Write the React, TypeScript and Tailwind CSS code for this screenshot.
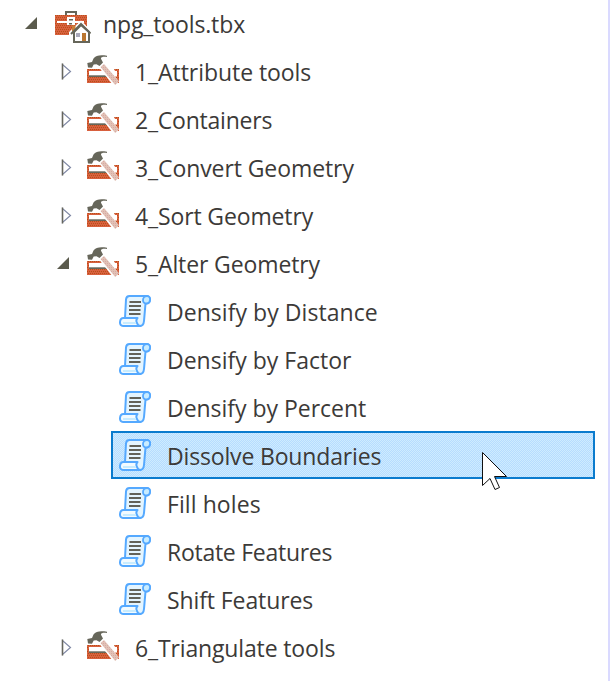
import React from "react";

type Kind = "root" | "toolset" | "script";
type Row = { label: string; kind: Kind; open?: boolean; selected?: boolean; tracking: string };

const rows: Row[] = [
  { label: "npg_tools.tbx", kind: "root", open: true, tracking: "tracking-[-0.13px]" },
  { label: "1_Attribute tools", kind: "toolset", tracking: "tracking-[-0.06px]" },
  { label: "2_Containers", kind: "toolset", tracking: "tracking-[-0.22px]" },
  { label: "3_Convert Geometry", kind: "toolset", tracking: "tracking-[-0.09px]" },
  { label: "4_Sort Geometry", kind: "toolset", tracking: "tracking-[-0.13px]" },
  { label: "5_Alter Geometry", kind: "toolset", open: true, tracking: "tracking-[-0.12px]" },
  { label: "Densify by Distance", kind: "script", tracking: "tracking-[0.05px]" },
  { label: "Densify by Factor", kind: "script", tracking: "tracking-[0px]" },
  { label: "Densify by Percent", kind: "script", tracking: "tracking-[-0.03px]" },
  { label: "Dissolve Boundaries", kind: "script", selected: true, tracking: "tracking-[-0.16px]" },
  { label: "Fill holes", kind: "script", tracking: "tracking-[0.08px]" },
  { label: "Rotate Features", kind: "script", tracking: "tracking-[-0.27px]" },
  { label: "Shift Features", kind: "script", tracking: "tracking-[-0.1px]" },
  { label: "6_Triangulate tools", kind: "toolset", tracking: "tracking-[-0.14px]" },
];

function Patterns() {
  return (
    <svg className="absolute size-0" aria-hidden="true">
      <defs>
        <pattern id="brick" width="4" height="4" patternUnits="userSpaceOnUse">
          <rect width="4" height="4" fill="#d8603e" />
          <path d="M0 0h1v1h-1zM2 0h1v1h-1zM1 2h1v1h-1zM3 2h1v1h-1z" fill="#b85018" />
        </pattern>
        <pattern id="wood" width="2" height="2" patternUnits="userSpaceOnUse">
          <rect width="2" height="2" fill="#e2c2b6" />
          <path d="M0 0h1v1h-1z" fill="#d6aaa5" />
        </pattern>
      </defs>
    </svg>
  );
}

function Arrow({ open }: { open?: boolean }) {
  return open ? (
    <svg width="12" height="12" viewBox="0 0 12 12">
      <path d="M12 0v12H0z" fill="#5b5b4d" />
    </svg>
  ) : (
    <svg width="12" height="17" viewBox="0 0 12 17">
      <path d="M1.500 1.500v14l8-7z" fill="#fff" stroke="#8089a5" strokeWidth="1.200" />
      <path d="M1.500 0.500v16" stroke="#66665c" strokeWidth="1.500" />
    </svg>
  );
}

function ToolboxIcon() {
  return (
    <svg width="36" height="32" viewBox="0 0 36 32">
      <path d="M11 4V1h10v3" fill="none" stroke="#66665a" strokeWidth="2" />
      <path d="M0 4h32v20H0z" fill="url(#brick)" />
      <path d="M2 10h27v2H2z" fill="#fff" />
      <path d="M12 6h8v8h-8z" fill="#fff" />
      <path d="M14 8h4v1.500h-4zM14 12h3v1.500h-3z" fill="#66665a" />
      <path d="M26 9.500L14 21v3h4v8h18V19.500z" fill="#fff" />
      <path d="M17 14.500h3.500v3.500L17 21z" fill="#c9803a" />
      <path d="M19 21l7-7 8 7v10H19z" fill="#fff" stroke="#66665a" strokeWidth="2" />
      <path d="M16 23L26 13l9.500 9.500" fill="none" stroke="#66665a" strokeWidth="2" />
      <path d="M21 22h4v4h-4z" fill="#aaaabb" />
      <path d="M27 22h4v8h-4z" fill="#bb7630" />
    </svg>
  );
}

function ToolsetIcon() {
  return (
    <svg width="34" height="32" viewBox="0 0 34 32">
      <path d="M0 14h32v14H0z" fill="url(#brick)" />
      <path d="M2 16h28v6H2z" fill="#fff" />
      <path d="M2 20.300h28V22H2z" fill="#66665a" />
      <path d="M12 12.500L17 8l5.500 6H27L33 26v4h-7z" fill="#fff" />
      <path d="M28 14h4v14h-1.500l1-2L28 21.500h2V16h-2z" fill="url(#brick)" />
      <path d="M13.500 12l3.500-3L32 26.500 28.200 30z" fill="url(#wood)" />
      <path d="M0.300 8L5 7l1.500-3.500C9 .5 13-.3 20 .8v1.300c-3.500-.6-5.800 0-6 1.200-.1 1 1.500 2.500 2 4.200L12.500 11 9.500 9.200 6.700 9.500 5 12.700 1 12.500z" fill="#66665a" />
    </svg>
  );
}

function ScriptIcon() {
  return (
    <svg width="32" height="32" viewBox="0 0 32 32">
      <g stroke="#55a9ff" strokeWidth="2" strokeLinejoin="round">
        <path d="M10.500 1H28c2 0 3.200 2 3 4s-1.500 3.500-3.500 3.500h-1L25 26c-.3 3-1.500 5-4 5H8l-2-8L7 4.500C7.200 2.500 8.500 1 10.500 1z" fill="#e4f5ff" />
        <path d="M27.500 8.500c-2 0-3.500-1.500-3.500-3.500s1.500-4 4-4 3.200 2 3 4-1.500 3.500-3.500 3.500z" fill="#c8ecff" strokeWidth="1.800" />
        <path d="M4.500 23H18.500c-1 1-1.500 3-.5 5 .5 1.500 1.700 3 3.500 3H4c-2 0-3.200-1.500-3-4s1.500-4 3.500-4z" fill="#f2fbff" />
      </g>
      <path d="M4 28h13" stroke="#c8ecff" strokeWidth="2" />
      <path d="M10.500 7h11.500M10 11h12M10 15h11.500M10 19h11.500" stroke="#626259" strokeWidth="2" />
    </svg>
  );
}

function TreeRow({ row }: { row: Row }) {
  const indent = row.kind === "root" ? "pl-[25px]" : row.kind === "toolset" ? "pl-[57px]" : "pl-[119px]";
  const label = row.kind === "script" ? "ml-4" : row.kind === "toolset" ? "ml-[14px]" : "ml-3";
  return (
    <div className={`relative flex h-12 items-start ${indent}`}>
      {row.selected && (
        <div className="absolute inset-y-0 left-[111px] w-[484px] border-2 border-[#0a7bce] bg-[#c2e4ff] bg-[repeating-conic-gradient(#b6dcff_0_25%,#ceecff_0_50%)] bg-size-[2px_2px]" />
      )}
      {row.kind !== "script" && (
        <div className={`flex w-[30px] shrink-0 ${row.open ? "pt-[18px]" : "pl-1 pt-4"}`}>
          <Arrow open={row.open} />
        </div>
      )}
      <div className={`relative shrink-0 ${row.kind === "root" ? "pt-3" : "pt-2"}`}>
        {row.kind === "root" ? <ToolboxIcon /> : row.kind === "toolset" ? <ToolsetIcon /> : <ScriptIcon />}
      </div>
      <span className={`relative whitespace-nowrap text-[23px] leading-[50px] ${label} ${row.tracking}`}>{row.label}</span>
    </div>
  );
}

export default function App() {
  return (
    <main className="relative h-[681px] w-[610px] overflow-hidden border-r-2 border-[#dadaff] bg-white font-['Open_Sans','Noto_Sans',sans-serif] text-[#3c3a38]">
      <Patterns />
      <div className="-mt-px flex flex-col">
        {rows.map((row) => (
          <TreeRow key={row.label} row={row} />
        ))}
      </div>
      <svg className="absolute left-[482px] top-[452px]" width="26" height="40" viewBox="0 0 26 40">
        <path d="M.5.5v33l7.500-7 5 11 4.500-2-5-11h12z" fill="#fff" stroke="#111" strokeWidth="1" />
      </svg>
    </main>
  );
}
